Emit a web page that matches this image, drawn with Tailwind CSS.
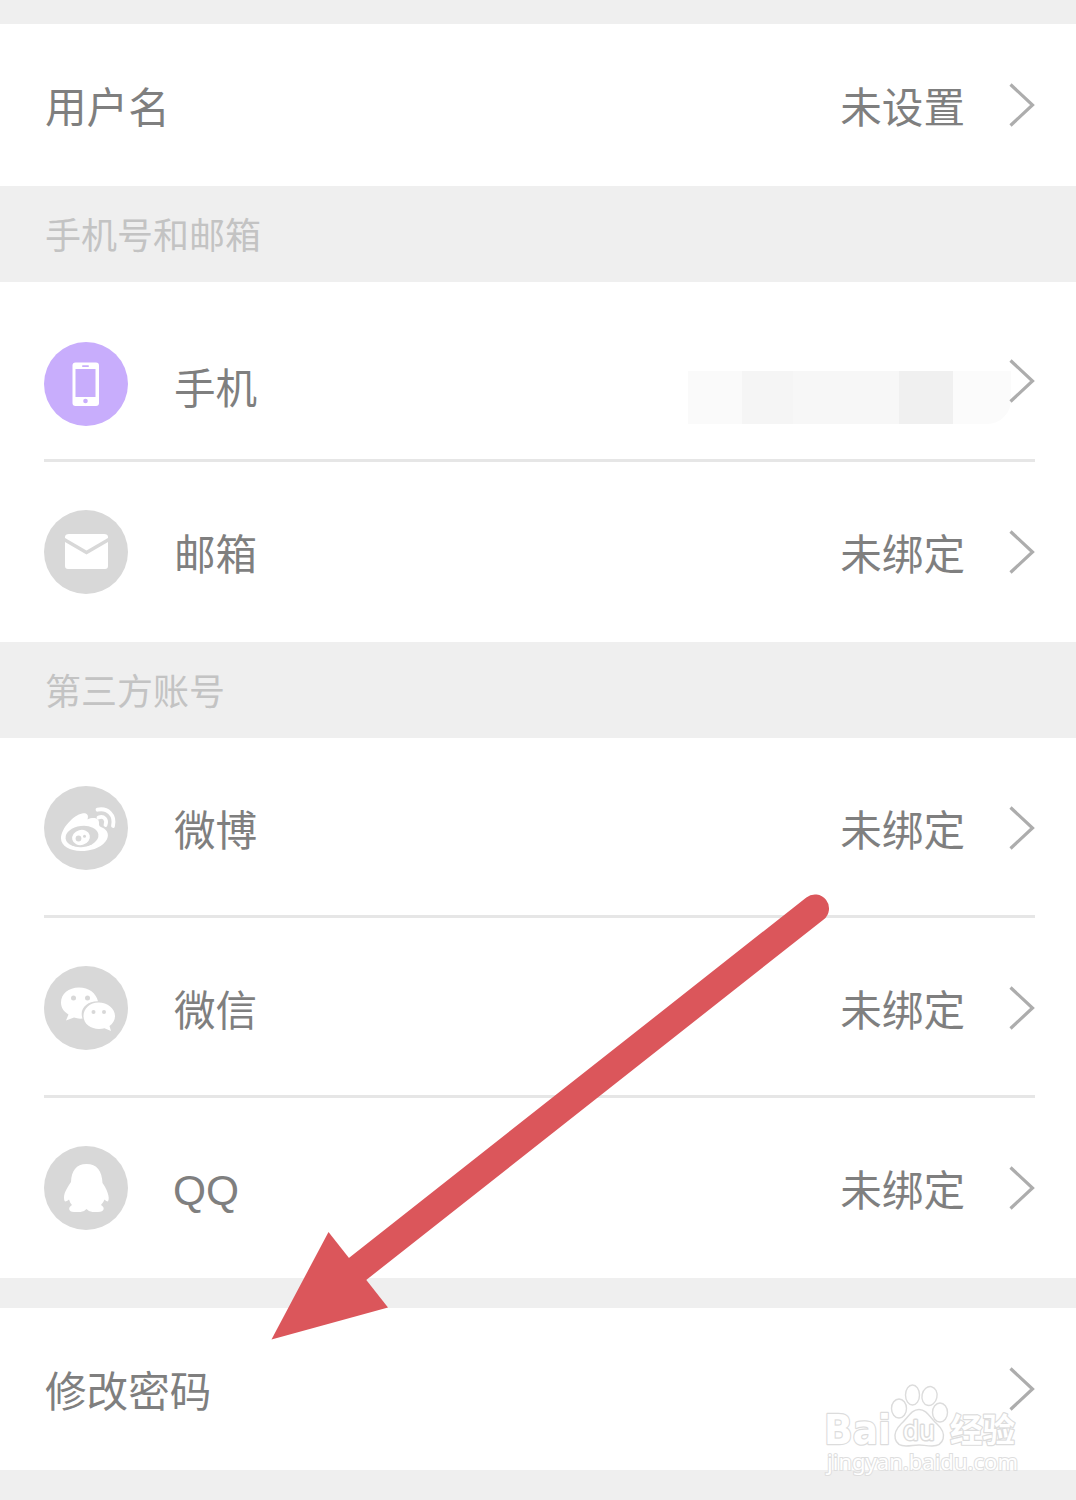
<!DOCTYPE html>
<html lang="zh-CN">

<head>
    <meta charset="UTF-8">
    <meta name="viewport" content="width=device-width, initial-scale=1.0">
    <title>账号设置</title>
    <script src="https://cdn.jsdelivr.net/npm/@tailwindcss/browser@4"></script>
</head>

<body class="relative w-[1076px] h-[1500px] overflow-hidden bg-[#efefef] pt-6 font-['Noto_Sans_CJK_SC',sans-serif] text-[41.6px] leading-[60px] text-[#7f7f7f]">
    <svg class="hidden">
        <symbol id="chevron" viewBox="0 0 26 44">
            <path d="M1.5 1.5 L23.5 22 L1.5 42.5" fill="none" stroke="#adadad" stroke-width="3.2" />
        </symbol>
    </svg>

    <!-- username -->
    <div class="flex items-center h-[162px] bg-white pl-[45px] pr-[41px]">
        <span class="flex-1">用户名</span>
        <span class="mr-[44px]">未设置</span>
        <svg class="w-[26px] h-[44px]"><use href="#chevron" /></svg>
    </div>

    <!-- phone and mail -->
    <h2 class="flex items-center h-24 pl-[45px] pb-0.5 text-[36px] text-[#c3c3c3]">手机号和邮箱</h2>
    <div class="bg-white pl-11 pr-[41px]">
        <div class="flex items-center h-[180px] border-b-3 border-[#e6e6e6]">
            <svg class="w-[84px] h-[84px] mt-[27px]" viewBox="0 0 84 84">
                <circle cx="42" cy="42" r="42" fill="#c8adfc" />
                <rect x="28.5" y="20.5" width="26.5" height="43.5" rx="3" fill="#fff" />
                <rect x="31.5" y="27" width="20" height="28" fill="#c8adfc" />
                <rect x="38" y="23.2" width="7" height="1.8" rx="0.9" fill="#c8adfc" />
                <circle cx="41.5" cy="59" r="2.3" fill="#c8adfc" />
            </svg>
            <span class="flex-1 ml-[46px] mt-[31px]">手机</span>
            <!-- masked number -->
            <div class="flex h-[53px] mt-[53px] mr-[-2px] rounded-br-3xl overflow-hidden">
                <div class="w-[54px] bg-[#fafafa]"></div>
                <div class="w-[51px] bg-[#f5f5f5]"></div>
                <div class="w-[106px] bg-[#f7f7f7]"></div>
                <div class="w-[54px] bg-[#f0f0f0]"></div>
                <div class="w-[58px] bg-[#fbfbfb]"></div>
            </div>
            <svg class="w-[26px] h-[44px] mt-[21px]"><use href="#chevron" /></svg>
        </div>
        <div class="flex items-center h-[180px]">
            <svg class="w-[84px] h-[84px]" viewBox="0 0 84 84">
                <circle cx="42" cy="42" r="42" fill="#d8d8d8" />
                <path d="M21 27 Q21 24 25 24 H60 Q64 24 64 27 V28 L42.5 40.5 L21 28 Z" fill="#fff" />
                <path d="M21 32 L42.5 44.5 L64 32 V56 Q64 59 61 59 H24 Q21 59 21 56 Z" fill="#fff" />
            </svg>
            <span class="flex-1 ml-[46px]">邮箱</span>
            <span class="mr-[44px]">未绑定</span>
            <svg class="w-[26px] h-[44px]"><use href="#chevron" /></svg>
        </div>
    </div>

    <!-- third-party accounts -->
    <h2 class="flex items-center h-24 pl-[45px] pb-0.5 text-[36px] text-[#c3c3c3]">第三方账号</h2>
    <div class="bg-white pl-11 pr-[41px]">
        <div class="flex items-center h-[180px] border-b-3 border-[#e6e6e6]">
            <svg class="w-[84px] h-[84px] mt-[3px]" viewBox="0 0 84 84">
                <circle cx="42" cy="42" r="42" fill="#d8d8d8" />
                <path d="M38 27.5 C43 26.5 45 29 43.500 33.5 C49 31 55.500 31.500 55 37.5 C54.800 39.5 55.5 40.5 58 41.5 C64 44 66 50 61.5 55.5 C56 62.5 46 65 37 65 C26 65 17 60 17 52.5 C17 42 30 29 38 27.5 Z" fill="#fff" />
                <ellipse cx="38" cy="50.5" rx="16.500" ry="10.5" transform="rotate(-7 38 50.5)" fill="#d8d8d8" />
                <ellipse cx="37" cy="51.5" rx="9" ry="7.5" transform="rotate(-15 37 51.5)" fill="#fff" />
                <circle cx="34.5" cy="52.5" r="2.9" fill="#d8d8d8" />
                <circle cx="40.5" cy="50.3" r="1.5" fill="#d8d8d8" />
                <path d="M53.5 23.7 C63.5 21.5 71.5 29 69 40 M54.5 31.5 C60 29.5 63.5 33.500 61.5 39" fill="none" stroke="#fff" stroke-width="3.8" stroke-linecap="round" />
            </svg>
            <span class="flex-1 ml-[46px] mt-[3px]">微博</span>
            <span class="mr-[44px] mt-[3px]">未绑定</span>
            <svg class="w-[26px] h-[44px] mt-[3px]"><use href="#chevron" /></svg>
        </div>
        <div class="flex items-center h-[180px] border-b-3 border-[#e6e6e6]">
            <svg class="w-[84px] h-[84px] mt-[3px]" viewBox="0 0 84 84">
                <circle cx="42" cy="42" r="42" fill="#d8d8d8" />
                <path d="M35 21.5 C24.5 21.5 17 28 17 36.5 C17 41.5 19.5 45.5 24.5 48.5 L22 54.5 L30 51.5 Q34 53 38.500 52.500 C35 43 43 35 54 35.3 C52 27 45 21.5 35 21.5 Z" fill="#fff" />
                <path d="M54.5 36.5 C46 36.5 39.5 42.5 39.5 50 C39.5 58 47 63 55 63 Q58 63 60.5 62.3 L67 65 L65.5 60 C69 57.5 71 54 71 50 C71 42.5 63.5 36.5 54.5 36.5 Z" fill="#fff" />
                <circle cx="29.5" cy="32" r="2.5" fill="#d8d8d8" />
                <circle cx="43.5" cy="32" r="2.5" fill="#d8d8d8" />
                <circle cx="49.5" cy="46" r="2" fill="#d8d8d8" />
                <circle cx="60" cy="46" r="2" fill="#d8d8d8" />
            </svg>
            <span class="flex-1 ml-[46px] mt-[3px]">微信</span>
            <span class="mr-[44px] mt-[3px]">未绑定</span>
            <svg class="w-[26px] h-[44px] mt-[3px]"><use href="#chevron" /></svg>
        </div>
        <div class="flex items-center h-[180px]">
            <svg class="w-[84px] h-[84px]" viewBox="0 0 84 84">
                <circle cx="42" cy="42" r="42" fill="#d8d8d8" />
                <path d="M42.5 18 C32 18 27.5 25 27 36 C24.5 40 20 46 20 51.5 C20 54 20.5 55.5 21.5 55.5 Q23.5 55 25 53.5 Q26 57 28 59 C24 61 24 66 30 66 H36.5 Q40 66 42.5 63 Q45 66 48.5 66 H54 C61 66 61 61 57 59 Q59.5 56.5 60.5 53.5 Q62 55.5 64 55.5 C66.5 51 62 42 58.5 37 C58 25 53 18 42.5 18 Z" fill="#fff" />
            </svg>
            <span class="flex-1 ml-[45px] mt-[5px] font-['Liberation_Sans',sans-serif] text-[42.5px]">QQ</span>
            <span class="mr-[44px]">未绑定</span>
            <svg class="w-[26px] h-[44px]"><use href="#chevron" /></svg>
        </div>
    </div>

    <!-- change password -->
    <div class="flex items-center h-[162px] mt-[30px] bg-white pl-[45px] pr-[41px]">
        <span class="flex-1">修改密码</span>
        <svg class="w-[26px] h-[44px]"><use href="#chevron" /></svg>
    </div>

    <!-- pointer arrow -->
    <svg class="absolute left-0 top-0 w-[1076px] h-[1500px]" viewBox="0 0 1076 1500">
        <path d="M815 908.5 L355 1271" fill="none" stroke="#db565b" stroke-width="28" stroke-linecap="round" />
        <path d="M271.5 1339.5 L328.5 1232 L388 1307.5 Z" fill="#db565b" />
    </svg>

    <!-- watermark -->
    <svg class="absolute left-[816px] top-[1376px] w-[220px] h-[110px]" viewBox="816 1376 220 110">
        <g fill="#fff" stroke="#dcdcdc" stroke-width="1.4" stroke-linejoin="round">
            <text x="824" y="1444" font-family="DejaVu Sans, sans-serif" font-weight="bold" font-size="41" textLength="67" lengthAdjust="spacingAndGlyphs" stroke-width="2.4" paint-order="stroke">Bai</text>
            <ellipse cx="899" cy="1408.5" rx="7.5" ry="9.5" />
            <ellipse cx="912.5" cy="1395" rx="7" ry="10" />
            <ellipse cx="929.5" cy="1396" rx="7.5" ry="9.5" transform="rotate(12 929.5 1396)" />
            <ellipse cx="940" cy="1412.5" rx="7.5" ry="9.5" />
            <path d="M919 1409.5 C927 1409.5 930 1418 937 1424 C948 1434 944 1446 932 1446 C926 1446 923 1445 919 1445 C914 1445 911 1446 906 1446 C894 1446 891 1434 901 1424 C908 1418 911 1409.5 919 1409.5 Z" />
            <text x="903" y="1440" font-family="DejaVu Sans, sans-serif" font-size="26" textLength="32" lengthAdjust="spacingAndGlyphs" stroke-width="3" paint-order="stroke">du</text>
            <text x="950" y="1442" font-family="Noto Sans CJK SC, sans-serif" font-size="33" font-weight="bold" textLength="65" lengthAdjust="spacingAndGlyphs" stroke-width="2.4" paint-order="stroke">经验</text>
        </g>
        <text x="827" y="1470" font-family="Noto Sans, sans-serif" font-size="22" textLength="191" lengthAdjust="spacingAndGlyphs" fill="#fff" stroke="#dedede" stroke-width="2" paint-order="stroke">jingyan.baidu.com</text>
    </svg>
</body>

</html>
